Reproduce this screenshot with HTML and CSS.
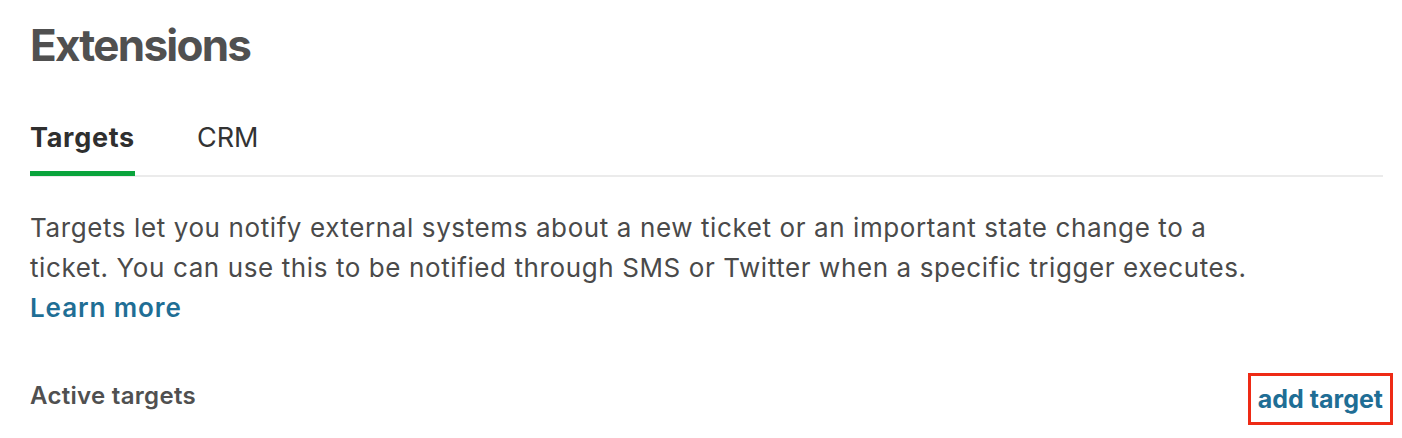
FILE: index.html
```html
<!DOCTYPE html>
<html lang="en">
<head>
<meta charset="utf-8">
<title>Extensions</title>
<link rel="stylesheet" href="styles.css">
</head>
<body>
<main class="page">
  <h1 class="title">Extensions</h1>
  <nav class="tabs">
    <a class="tab tab-active">Targets</a>
    <a class="tab">CRM</a>
  </nav>
  <p class="intro">Targets let you notify external systems about a new ticket or an important state change to a ticket. You can use this to be notified through SMS or Twitter when a specific trigger executes.<br><a class="link">Learn more</a></p>
  <div class="section-head">
    <h2 class="section-title">Active targets</h2>
    <a class="add-link">add target</a>
  </div>
</main>
</body>
</html>
```

FILE: styles.css
```css
html, body {
  margin: 0;
  padding: 0;
  background: #ffffff;
}
body {
  font-family: Inter, "Noto Sans", "Liberation Sans", sans-serif;
  color: #3d3d3d;
}
.page {
  padding: 19px 19px 0 30px;
}
.title {
  margin: 0;
  font-size: 44px;
  line-height: 53px;
  font-weight: 700;
  letter-spacing: -1.75px;
  color: #505050;
}
.tabs {
  display: flex;
  gap: 62px;
  margin-top: 50px;
  border-bottom: 2px solid #ebebeb;
}
.tab {
  display: block;
  font-size: 27px;
  line-height: 32px;
  padding: 0 0 17px;
  color: #333333;
  border-bottom: 5px solid transparent;
  margin-bottom: -1px;
}
.tab-active {
  font-weight: 700;
  letter-spacing: 0.7px;
  color: #2f2f2f;
  border-bottom-color: #0aa43c;
}
.intro {
  margin: 31px 0 0;
  max-width: 1240px;
  font-size: 26px;
  line-height: 40px;
  letter-spacing: 0.6px;
  color: #4a4a4a;
}
.link {
  font-weight: 600;
  letter-spacing: 0.9px;
  color: #1f6e95;
}
.section-head {
  display: flex;
  justify-content: space-between;
  align-items: flex-start;
  margin-top: 45px;
}
.section-title {
  margin: 8px 0 0;
  font-size: 24px;
  line-height: 29px;
  font-weight: 600;
  letter-spacing: 0.3px;
  color: #505050;
}
.add-link {
  font-size: 25px;
  line-height: 30px;
  font-weight: 700;
  color: #1f6e95;
  padding: 8px 7px 8px 7px;
  border: 3px solid #ee2a15;
  margin-right: -10px;
}
```
